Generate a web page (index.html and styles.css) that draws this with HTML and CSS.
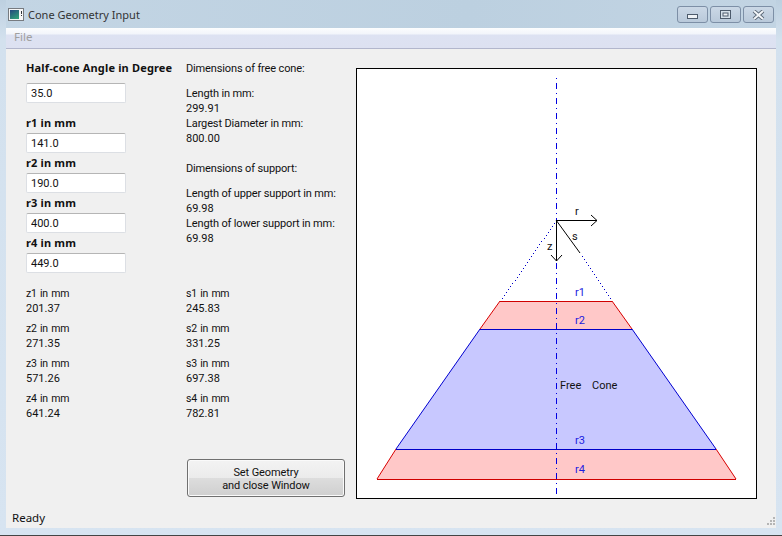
FILE: index.html
```html
<!DOCTYPE html>
<html lang="en">
<head>
<meta charset="utf-8">
<title>Cone Geometry Input</title>
<link rel="stylesheet" href="styles.css">
</head>
<body>
<div class="window">
  <header class="titlebar">
    <svg class="app-icon" width="16" height="14" viewBox="0 0 16 14">
      <defs><linearGradient id="appfill" x1="0" y1="0" x2="0.6" y2="1"><stop offset="0" stop-color="#25477f"/><stop offset="1" stop-color="#2f9a78"/></linearGradient></defs>
      <rect x="0.5" y="0.5" width="15" height="12" fill="#f6f6f6" stroke="#777b80"/>
      <rect x="2" y="2" width="9" height="9" fill="url(#appfill)"/>
      <rect x="13" y="3" width="1" height="3" fill="#30343a"/>
      <rect x="13" y="7" width="1" height="1" fill="#30343a"/>
    </svg>
    <span class="title">Cone Geometry Input</span>
    <div class="controls">
      <button class="ctl ctl-min" aria-label="Minimize"><svg width="12" height="6" viewBox="0 0 12 6"><rect x="0.5" y="0.5" width="10" height="4" fill="#eef2f6" stroke="#4d5b6c"/></svg></button>
      <button class="ctl" aria-label="Maximize"><svg width="11" height="9" viewBox="0 0 11 9"><rect x="0.5" y="0.5" width="10" height="8" fill="#d5e0ea" stroke="#4d5b6c"/><rect x="3" y="3" width="5" height="3" fill="#eef2f6" stroke="#4d5b6c" stroke-width="1"/></svg></button>
      <button class="ctl" aria-label="Close"><svg width="13" height="10" viewBox="0 0 13 10"><path d="M2 1L11 9M11 1L2 9" stroke="#5a6675" stroke-width="3.8"/><path d="M2 1L11 9M11 1L2 9" stroke="#f2f5f8" stroke-width="2"/></svg></button>
    </div>
  </header>
  <div class="client">
    <nav class="menubar"><span class="menu-item">File</span></nav>
    <main class="content">
      <section class="col col-a">
        <label class="head first">Half-cone Angle in Degree</label>
        <input class="field field-first" value="35.0">
        <label class="head gap-large">r1 in mm</label>
        <input class="field" value="141.0">
        <label class="head">r2 in mm</label>
        <input class="field" value="190.0">
        <label class="head">r3 in mm</label>
        <input class="field" value="400.0">
        <label class="head">r4 in mm</label>
        <input class="field" value="449.0">
        <div class="results">
          <div class="pair"><p class="unit">z1 in mm</p><p>201.37</p></div>
          <div class="pair"><p class="unit">z2 in mm</p><p>271.35</p></div>
          <div class="pair"><p class="unit">z3 in mm</p><p>571.26</p></div>
          <div class="pair"><p class="unit">z4 in mm</p><p>641.24</p></div>
        </div>
      </section>
      <section class="col col-b">
        <p class="caption">Dimensions of free cone:</p>
        <p class="caption spaced">Length in mm:</p>
        <p>299.91</p>
        <p class="caption">Largest Diameter in mm:</p>
        <p>800.00</p>
        <p class="caption spaced-large">Dimensions of support:</p>
        <p class="caption spaced">Length of upper support in mm:</p>
        <p>69.98</p>
        <p class="caption">Length of lower support in mm:</p>
        <p>69.98</p>
        <div class="results results-b">
          <div class="pair"><p class="unit">s1 in mm</p><p>245.83</p></div>
          <div class="pair"><p class="unit">s2 in mm</p><p>331.25</p></div>
          <div class="pair"><p class="unit">s3 in mm</p><p>697.38</p></div>
          <div class="pair"><p class="unit">s4 in mm</p><p>782.81</p></div>
        </div>
        <button class="action">Set Geometry<br>and close Window</button>
      </section>
      <svg class="drawing" width="401" height="431" viewBox="356 68 401 431">
        <rect x="356.5" y="68.5" width="400" height="430" fill="#fff" stroke="#000"/>
        <g shape-rendering="crispEdges">
          <polygon points="500,301 612,301 632,329 480,329" fill="#ffc8c8"/>
          <polygon points="480,329 632,329 716,449 396,449" fill="#c8c8ff"/>
          <polygon points="396,449 716,449 736,479 377,479" fill="#ffc8c8"/>
        </g>
        <g>
          <path d="M500 301L480 329M612 301L632 329M396 449L377 479M716 449L736 479" stroke="#d80000" fill="none"/>
          <path d="M480 329L396 449M632 329L716 449" stroke="#0000d0" fill="none"/>
        </g>
        <g shape-rendering="crispEdges">
          <path d="M500 301.5H612M377 479.5H736" stroke="#d00000"/>
          <path d="M480 329.5H632M396 449.5H716" stroke="#0000c8"/>
          <path d="M556.5 78V498" stroke="#0000e0" stroke-dasharray="1 4 6 4"/>
          <path stroke="#0000c8" d="M554 223.5h1M552 226.5h1M550 229.5h1M548 232.5h1M546 235.5h1M544 238.5h1M541 241.5h1M539 244.5h1M537 247.5h1M535 250.5h1M533 253.5h1M531 256.5h1M529 259.5h1M527 262.5h1M525 265.5h1M523 268.5h1M521 271.5h1M519 274.5h1M517 277.5h1M515 280.5h1M512 283.5h1M510 286.5h1M508 289.5h1M506 292.5h1M504 295.5h1M502 298.5h1"/>
          <path stroke="#0000c8" d="M582 256.5h1M584 259.5h1M586 262.5h1M588 265.5h1M590 268.5h1M592 271.5h1M594 274.5h1M596 277.5h1M598 280.5h1M600 283.5h1M602 286.5h1M604 289.5h1M606 292.5h1M608 295.5h1M610 298.5h1"/>
          <path d="M556 220.5H597M556.5 220V261" fill="none" stroke="#000"/>
        </g>
        <path d="M591 215L597 220.5L591 226M551 255L556.5 261L562 255M556 220L580 253" fill="none" stroke="#000"/>
        <g class="fig-black">
          <text x="575" y="215">r</text>
          <text x="572" y="240">s</text>
          <text x="547" y="250">z</text>
          <text x="560" y="389">Free</text>
          <text x="592" y="389">Cone</text>
        </g>
        <g class="fig-blue">
          <text x="575" y="296">r1</text>
          <text x="575" y="324">r2</text>
          <text x="575" y="444">r3</text>
          <text x="575" y="473">r4</text>
        </g>
      </svg>
    </main>
    <footer class="statusbar">
      <span>Ready</span>
      <svg class="grip" width="12" height="12" viewBox="0 0 12 12"><path d="M9 1h2v2H9zM6 4h2v2H6zM9 4h2v2H9zM3 7h2v2H3zM6 7h2v2H6zM9 7h2v2H9z" fill="#b5b5b5"/></svg>
    </footer>
  </div>
</div>
</body>
</html>
```
FILE: styles.css
```css
* { box-sizing: border-box; }
html, body { margin: 0; padding: 0; }
body {
  font-family: Roboto, "Liberation Sans", sans-serif;
  font-size: 11px;
  line-height: 15px;
  color: #111;
}
p { margin: 0; }
.caption { letter-spacing: -0.14px; }
.unit { font-size: 10.5px; letter-spacing: -0.25px; word-spacing: 1px; }
.window {
  width: 782px;
  height: 536px;
  display: flex;
  flex-direction: column;
  padding: 0 6px 7px;
  background: linear-gradient(180deg, #bdd0e0 0, #d3e1ee 40px, #d7e4f1 100%);
  border-bottom: 1px solid #444;
}
.titlebar {
  height: 28px;
  flex: none;
  display: flex;
  align-items: center;
  background: linear-gradient(90deg, #c3d5e4, #bcd0e0 60%, #c2d4e3);
}
.app-icon { margin: 1px 6px 0 2px; }
.title { font-family: "Noto Sans", sans-serif; font-size: 11px; color: #333; margin-left: -2px; }
.controls { margin-left: auto; display: flex; gap: 2px; margin-right: 2px; margin-top: 1px; }
.ctl {
  width: 31px;
  height: 17px;
  padding: 0;
  display: flex;
  align-items: center;
  justify-content: center;
  border: 1px solid #7d8fa6;
  border-radius: 3px;
  background: linear-gradient(180deg, #cbd8e6, #b9c9da);
}
.ctl-min { padding-top: 4px; }
.client {
  flex: 1;
  display: flex;
  flex-direction: column;
  background: #f0f0f0;
  min-height: 0;
}
.menubar {
  height: 21px;
  flex: none;
  padding: 1px 8px 0;
  background: linear-gradient(180deg, #fcfdfe 0, #f2f5fb 6px, #dde2f2 7px, #dde1f1 100%);
  border-bottom: 1px solid #b2b6cc;
  color: #a0a0a0;
  font-family: "Noto Sans", sans-serif;
  font-size: 11.5px;
}
.content {
  flex: 1;
  display: flex;
  padding: 12px 0 0 20px;
  min-height: 0;
}
.col { display: flex; flex-direction: column; align-items: flex-start; }
.col-a { width: 160px; }
.col-b { width: 170px; }
.head {
  font-family: "Noto Sans", sans-serif;
  font-weight: 700;
  letter-spacing: 0.16px;
  display: block;
  line-height: 14px;
  margin-top: 3px;
  margin-bottom: 1px;
}
.head.first { margin-top: 0; }
.head.gap-large { margin-top: 13px; }
.field {
  width: 100px;
  height: 20px;
  margin-top: 2px;
  padding: 0 4px;
  font: inherit;
  color: #111;
  background: #fff;
  border: 1px solid #dcdfe4;
  border-top-color: #b5b5b5;
  border-radius: 2px;
  outline: none;
}
.field-first { margin-top: 7px; }
.results { margin-top: 13px; display: flex; flex-direction: column; gap: 5px; }
.results-b { margin-top: 40px; }
.spaced { margin-top: 10px; }
.spaced-large { margin-top: 15px; }
.action {
  margin-top: auto;
  margin-bottom: 10px;
  margin-left: 1px;
  width: 158px;
  height: 38px;
  padding: 2px 0 0;
  font: inherit;
  letter-spacing: -0.1px;
  line-height: 13px;
  color: #111;
  border: 1px solid #707070;
  border-radius: 3px;
  box-shadow: inset 0 0 0 1px #fafafa;
  background: linear-gradient(180deg, #f3f3f3 0, #ebebeb 50%, #dddddd 50%, #cfcfcf 100%);
}
.drawing { flex: none; display: block; margin-top: 7px; }
.fig-black text { fill: #111; font-size: 11px; }
.fig-blue text { fill: #1c1ce0; font-size: 11px; }
.statusbar {
  height: 21px;
  flex: none;
  display: flex;
  align-items: center;
  justify-content: space-between;
  padding-left: 6px;
  font-family: "Noto Sans", sans-serif;
  font-size: 11.5px;
}
.grip { align-self: flex-end; }
```
